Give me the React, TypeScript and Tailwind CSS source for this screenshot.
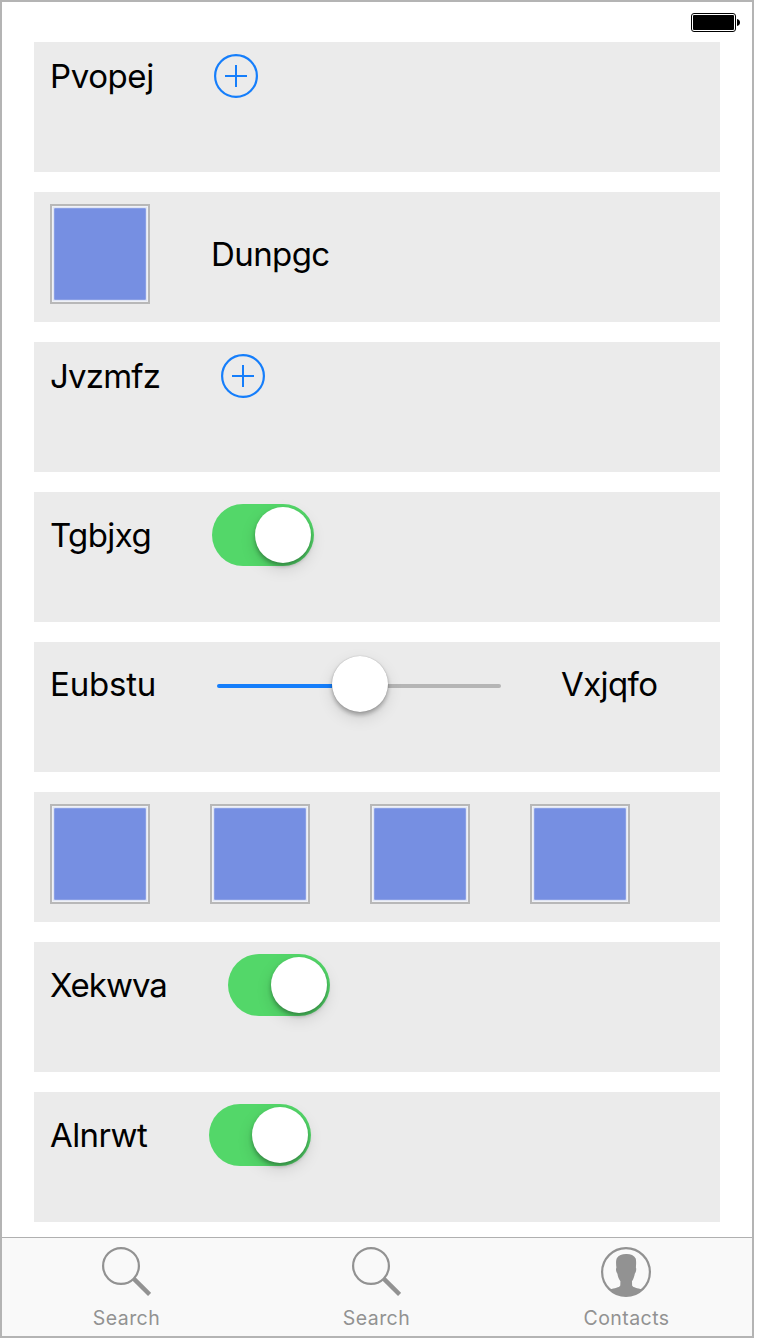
import type { ReactNode } from "react";

function Row({ height, children }: { height: string; children: ReactNode }) {
  return (
    <section className="h-[130px] bg-[#ebebeb] pt-3 pl-4">
      <div className={`flex items-center gap-[60px] ${height}`}>{children}</div>
    </section>
  );
}

function Label({ width, tracking, children }: { width: string; tracking: string; children: string }) {
  return (
    <span className={`shrink-0 whitespace-nowrap text-[33px] leading-10 text-black ${width} ${tracking}`}>
      {children}
    </span>
  );
}

function AddButton() {
  return (
    <button type="button" aria-label="Add" className="size-11 shrink-0">
      <svg viewBox="0 0 44 44" className="size-11" fill="none" stroke="#157efb" strokeWidth="2">
        <circle cx="22" cy="22" r="20.9" strokeWidth="2.2" />
        <path d="M11 22H33M22 11V33" />
      </svg>
    </button>
  );
}

function Swatch() {
  return (
    <div className="size-[100px] shrink-0 border-2 border-[#b8b8b8] bg-[#eff1f6] p-px">
      <div className="size-full border border-[#dfe4f4] bg-[#dfe4f4]">
        <div className="size-full rounded-[1px] border border-[#8a9fe5] bg-[#768fe2]" />
      </div>
    </div>
  );
}

function Toggle() {
  return (
    <button
      type="button"
      role="switch"
      aria-checked="true"
      className="flex h-[62px] w-[102px] shrink-0 items-center justify-end rounded-full bg-[#53d769] pr-[3px]"
    >
      <span className="size-14 rounded-full bg-white shadow-[0_6px_16px_rgba(0,0,0,0.13),0_3px_4px_rgba(0,0,0,0.3)]" />
    </button>
  );
}

function Slider() {
  return (
    <div className="flex h-[60px] w-[284px] shrink-0 items-center">
      <div className="mt-1 h-1 w-[115px] rounded-l-full bg-[#157efb]" />
      <div className="z-10 size-14 rounded-full bg-white shadow-[0_6px_16px_rgba(0,0,0,0.12),0_3px_4px_rgba(0,0,0,0.28),0_0_1px_rgba(0,0,0,0.3)]" />
      <div className="mt-1 h-1 w-[113px] rounded-r-full bg-[#b5b5b5]" />
    </div>
  );
}

function SearchIcon() {
  return (
    <svg viewBox="0 0 50 50" className="size-[50px]" fill="none" stroke="#929292">
      <circle cx="20" cy="19" r="17.9" strokeWidth="2.2" />
      <path d="M32.4 31.4L48.6 47.5" strokeWidth="4.4" />
    </svg>
  );
}

function ContactIcon() {
  return (
    <svg viewBox="0 0 50 50" className="size-[50px]" fill="none">
      <circle cx="25" cy="25" r="23.9" stroke="#929292" strokeWidth="2.2" />
      <path
        fill="#929292"
        d="M25 7C29 6.8 33 8 34.7 11.5C35.3 13.4 35.2 17.5 34.9 20.5C35.6 22 35.2 25 33.8 26.8C33.4 29.5 32.3 32.5 31 34.2L31.1 38.5C32.3 40.8 36 41 41.4 42.4A24 24 0 0 1 8.6 42.4C14 41 18 40.8 19.3 38.5L19.4 34.2C17.8 32.3 16.8 29.5 16.4 26.8C15 25 14.6 22 15.4 20.5C14.9 17 14.9 13.3 15.8 11.3C17.6 8.2 21 7.1 25 7Z"
      />
    </svg>
  );
}

function Tab({ icon, label }: { icon: ReactNode; label: string }) {
  return (
    <button type="button" className="flex w-[250px] flex-col items-center pt-[9px] pr-[2px] text-[#929292]">
      {icon}
      <span className="mt-[9px] pl-px text-[19.5px] leading-6 tracking-[0.45px]">{label}</span>
    </button>
  );
}

export default function App() {
  return (
    <div className="min-h-[1340px] bg-white font-['Inter',sans-serif]">
      <div className="flex h-[1338px] w-[754px] flex-col border-2 border-[#b4b4b4] bg-white">
        <header className="flex h-10 shrink-0 justify-end pt-[11px] pr-3">
          <svg viewBox="0 0 49 19" className="h-[19px] w-[49px]">
            <rect x="0.5" y="0.5" width="44" height="18" rx="2.5" fill="white" stroke="black" />
            <rect x="2" y="2" width="41" height="15" rx="1" fill="black" />
            <path d="M46 6C48 6.4 49 7.7 49 9.5C49 11.3 48 12.6 46 13Z" fill="black" />
          </svg>
        </header>
        <main className="flex h-[1195px] shrink-0 flex-col gap-5 pr-8 pl-8">
          <Row height="h-11">
            <Label width="w-[104px]" tracking="tracking-[-0.4px]">Pvopej</Label>
            <AddButton />
          </Row>
          <Row height="h-[100px]">
            <Swatch />
            <Label width="w-[120px] pl-px" tracking="tracking-[-0.6px]">Dunpgc</Label>
          </Row>
          <Row height="h-11">
            <Label width="w-[111px]" tracking="tracking-[-0.8px]">Jvzmfz</Label>
            <AddButton />
          </Row>
          <Row height="h-[62px]">
            <Label width="w-[102px]" tracking="tracking-[-0.6px]">Tgbjxg</Label>
            <Toggle />
          </Row>
          <Row height="h-[60px]">
            <Label width="w-[107px]" tracking="tracking-[-0.2px]">Eubstu</Label>
            <Slider />
            <Label width="w-[98px]" tracking="tracking-[-0.6px]">Vxjqfo</Label>
          </Row>
          <Row height="h-[100px]">
            <Swatch />
            <Swatch />
            <Swatch />
            <Swatch />
          </Row>
          <Row height="h-[62px]">
            <Label width="w-[118px]" tracking="tracking-[-1px]">Xekwva</Label>
            <Toggle />
          </Row>
          <Row height="h-[62px]">
            <Label width="w-[99px]" tracking="tracking-[-0.6px]">Alnrwt</Label>
            <Toggle />
          </Row>
        </main>
        <nav className="flex h-[99px] shrink-0 border-t border-[#b0b0b0] bg-[#f9f9f9]">
          <Tab icon={<SearchIcon />} label="Search" />
          <Tab icon={<SearchIcon />} label="Search" />
          <Tab icon={<ContactIcon />} label="Contacts" />
        </nav>
      </div>
    </div>
  );
}
